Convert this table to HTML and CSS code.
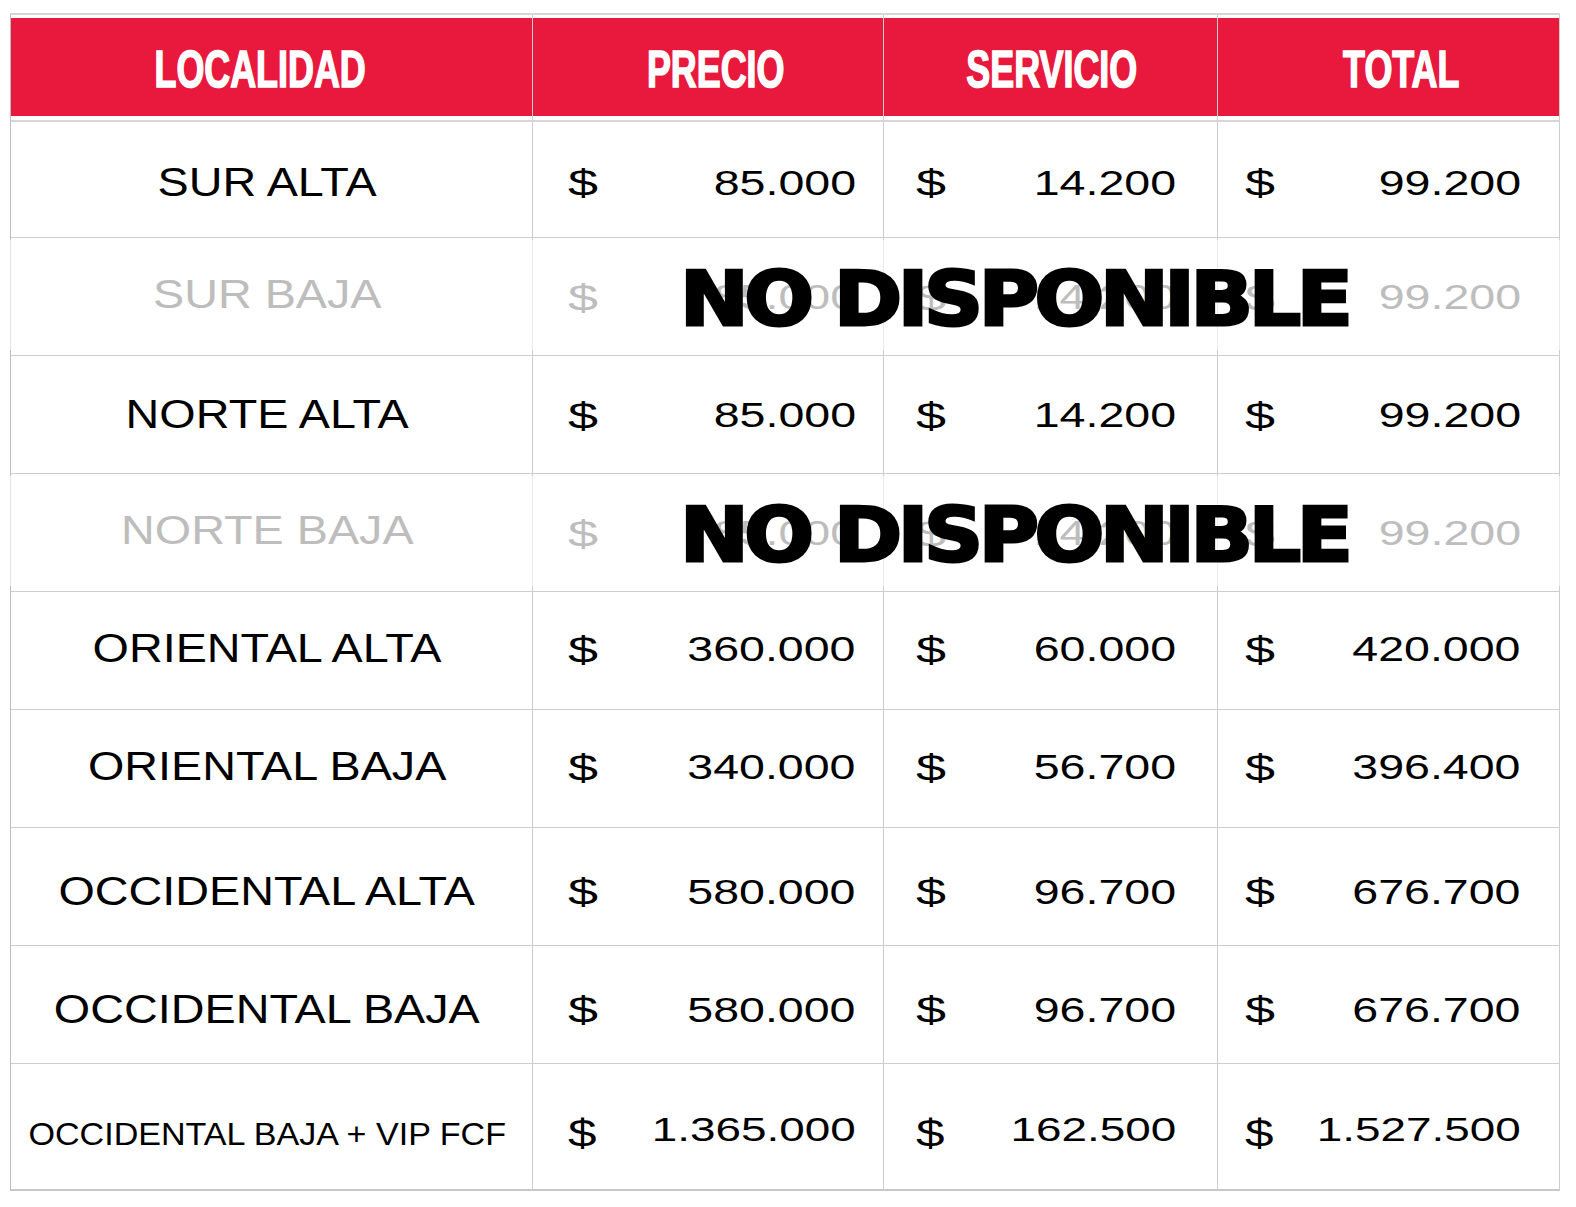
FILE: index.html
```html
<!DOCTYPE html>
<html lang="es">
<head>
<meta charset="utf-8">
<title>Precios por localidad</title>
<link rel="stylesheet" href="styles.css">
</head>
<body>
<div class="sheet">
  <div class="row head">
    <div class="cell c1"><div class="red"><span class="ht">LOCALIDAD</span></div></div>
    <div class="cell c2"><div class="red"><span class="ht">PRECIO</span></div></div>
    <div class="cell c3"><div class="red"><span class="ht">SERVICIO</span></div></div>
    <div class="cell c4"><div class="red"><span class="ht">TOTAL</span></div></div>
  </div>

  <div class="row first">
    <div class="cell name"><span class="nm">SUR ALTA</span></div>
    <div class="cell money c2"><span class="cur">$</span><span class="num">85.000</span></div>
    <div class="cell money c3"><span class="cur">$</span><span class="num">14.200</span></div>
    <div class="cell money c4"><span class="cur">$</span><span class="num">99.200</span></div>
  </div>

  <div class="row off">
    <div class="cell name"><span class="nm">SUR BAJA</span></div>
    <div class="cell money c2"><span class="cur">$</span><span class="num">85.000</span></div>
    <div class="cell money c3"><span class="cur">$</span><span class="num">14.200</span></div>
    <div class="cell money c4"><span class="cur">$</span><span class="num">99.200</span></div>
    <div class="stamp">NO DISPONIBLE</div>
  </div>

  <div class="row">
    <div class="cell name"><span class="nm">NORTE ALTA</span></div>
    <div class="cell money c2"><span class="cur">$</span><span class="num">85.000</span></div>
    <div class="cell money c3"><span class="cur">$</span><span class="num">14.200</span></div>
    <div class="cell money c4"><span class="cur">$</span><span class="num">99.200</span></div>
  </div>

  <div class="row off">
    <div class="cell name"><span class="nm">NORTE BAJA</span></div>
    <div class="cell money c2"><span class="cur">$</span><span class="num">85.000</span></div>
    <div class="cell money c3"><span class="cur">$</span><span class="num">14.200</span></div>
    <div class="cell money c4"><span class="cur">$</span><span class="num">99.200</span></div>
    <div class="stamp">NO DISPONIBLE</div>
  </div>

  <div class="row raise">
    <div class="cell name"><span class="nm">ORIENTAL ALTA</span></div>
    <div class="cell money c2"><span class="cur">$</span><span class="num">360.000</span></div>
    <div class="cell money c3"><span class="cur">$</span><span class="num">60.000</span></div>
    <div class="cell money c4"><span class="cur">$</span><span class="num">420.000</span></div>
  </div>

  <div class="row raise">
    <div class="cell name"><span class="nm">ORIENTAL BAJA</span></div>
    <div class="cell money c2"><span class="cur">$</span><span class="num">340.000</span></div>
    <div class="cell money c3"><span class="cur">$</span><span class="num">56.700</span></div>
    <div class="cell money c4"><span class="cur">$</span><span class="num">396.400</span></div>
  </div>

  <div class="row lower">
    <div class="cell name"><span class="nm">OCCIDENTAL ALTA</span></div>
    <div class="cell money c2"><span class="cur">$</span><span class="num">580.000</span></div>
    <div class="cell money c3"><span class="cur">$</span><span class="num">96.700</span></div>
    <div class="cell money c4"><span class="cur">$</span><span class="num">676.700</span></div>
  </div>

  <div class="row lower">
    <div class="cell name"><span class="nm">OCCIDENTAL BAJA</span></div>
    <div class="cell money c2"><span class="cur">$</span><span class="num">580.000</span></div>
    <div class="cell money c3"><span class="cur">$</span><span class="num">96.700</span></div>
    <div class="cell money c4"><span class="cur">$</span><span class="num">676.700</span></div>
  </div>

  <div class="row last">
    <div class="cell name"><span class="nm">OCCIDENTAL BAJA + VIP FCF</span></div>
    <div class="cell money c2"><span class="cur">$</span><span class="num">1.365.000</span></div>
    <div class="cell money c3"><span class="cur">$</span><span class="num">162.500</span></div>
    <div class="cell money c4"><span class="cur">$</span><span class="num">1.527.500</span></div>
  </div>
</div>
</body>
</html>
```

FILE: styles.css
```css
* { box-sizing: border-box; }

html, body {
  margin: 0;
  padding: 0;
  background: #ffffff;
}

body {
  font-family: "Liberation Sans", Arial, sans-serif;
  color: #000;
}

.sheet {
  margin: 13px 0 0 10px;
  width: 1550px;
  border-top: 2px solid #d6d6d6;
  border-left: 1px solid #bdbdbd;
}

.row {
  position: relative;
  display: grid;
  grid-template-columns: 522px 351px 334px 342px;
}

.cell {
  height: 118px;
  border-right: 1px solid #cdcdcd;
  border-bottom: 1px solid #cdcdcd;
  display: flex;
  align-items: center;
  white-space: nowrap;
}

/* header */
.head .cell {
  height: 107px;
  padding: 3px 0 4px 0;
  border-bottom: 2px solid #d6d6d6;
  display: block;
}

.red {
  height: 98px;
  background: #e8193c;
  display: flex;
  align-items: center;
  justify-content: center;
  padding-top: 3px;
}

.head .c1 .red { padding-right: 22px; }
.head .c2 .red { padding-left: 16px; }
.head .c3 .red { padding-left: 2px; }
.head .c4 .red { padding-left: 26px; }

.ht {
  display: inline-block;
  font-family: "Liberation Sans", Arial, sans-serif;
  font-weight: 700;
  font-size: 52px;
  line-height: 1;
  color: #ffffff;
  -webkit-text-stroke: 1.6px #ffffff;
  transform: scaleX(0.69);
}

/* body rows */
.first .cell { height: 116px; padding-top: 5px; }
.raise .cell { padding-bottom: 4px; }
.lower .cell { padding-top: 9px; }
.last .cell {
  height: 127px;
  padding-top: 6px;
  border-bottom-width: 2px;
  border-bottom-color: #c8c8c8;
}
.last .name { padding-top: 14px; }

.name {
  justify-content: center;
  padding-right: 9px;
}

.nm {
  display: inline-block;
  font-size: 41px;
  line-height: 1;
  transform: scaleX(1.14);
}

.money {
  justify-content: space-between;
}

.money.c2 { padding-left: 35px; padding-right: 27px; }
.money.c3 { padding-left: 32px; padding-right: 41px; }
.money.c4 { padding-left: 27px; padding-right: 38px; }

.cur {
  display: inline-block;
  font-size: 36px;
  line-height: 1;
  transform: scaleX(1.5);
  transform-origin: left center;
  position: relative;
  top: 2px;
}

.num {
  display: inline-block;
  font-size: 35px;
  line-height: 1;
  transform: scaleX(1.33);
  transform-origin: right center;
}

.last .nm {
  font-size: 32px;
  transform: scaleX(1.065);
}

.last .cur {
  font-size: 38px;
  transform: scaleX(1.35);
  top: 4px;
}

.last .num {
  font-size: 33px;
  transform: scaleX(1.39);
}

/* unavailable rows */
.off .cell { color: #bdbdbd; }
.off .name { padding-bottom: 4px; }

.off::before {
  content: "";
  position: absolute;
  left: -1px;
  right: 0;
  top: 2px;
  bottom: 6px;
  background: rgba(255, 255, 255, 0.6);
  z-index: 1;
}

.off .cell > span {
  position: relative;
  z-index: 2;
}

.stamp {
  position: absolute;
  left: 669px;
  top: 50%;
  margin-top: 2px;
  transform: translateY(-50%) scaleX(1.095);
  transform-origin: left center;
  z-index: 3;
  font-family: "DejaVu Sans", Verdana, sans-serif;
  font-weight: 700;
  font-size: 75px;
  line-height: 1;
  letter-spacing: -4px;
  color: #000;
  -webkit-text-stroke: 3px #000;
  white-space: nowrap;
}
```
